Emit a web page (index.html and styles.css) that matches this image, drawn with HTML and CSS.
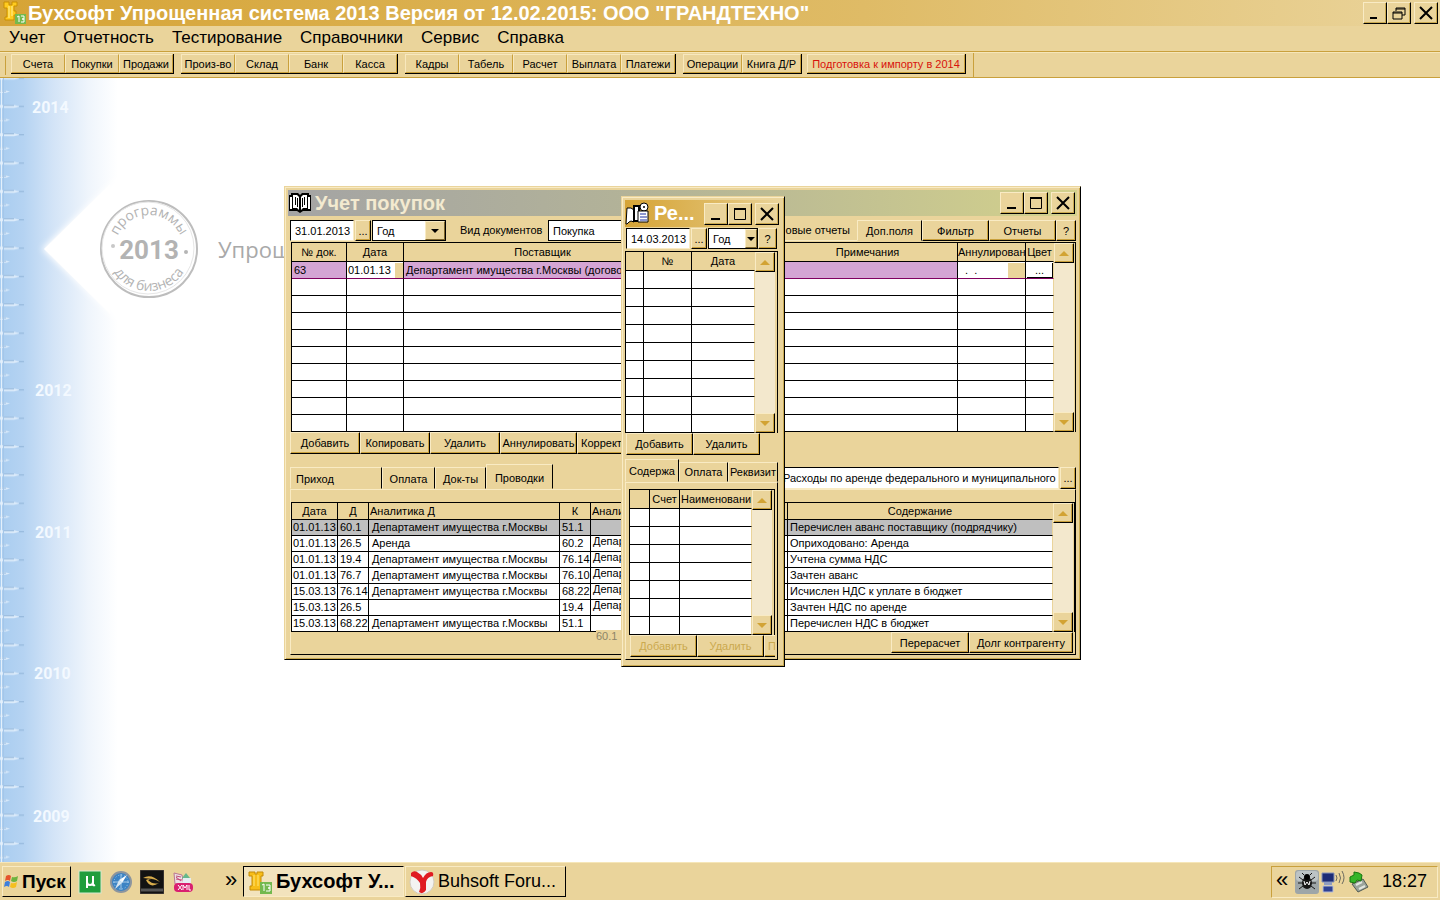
FILE: index.html
```html
<!DOCTYPE html>
<html lang="ru">
<head>
    <meta charset="UTF-8">
    <meta name="viewport" content="width=device-width, initial-scale=1.0">
    <title>Бухсофт Упрощенная система 2013</title>
    <link rel="stylesheet" href="styles.css">
</head>
<body>
    <header class="titlebar main-title">
        <svg class="app-icon" width="24" height="24" viewBox="0 0 24 24">
            <path d="M2 1h5v3h3V1h5v4h-3v5h2v4h-2v5H3v-3h2V7H2z" fill="#ffcb1f" stroke="#c98f00"/>
            <path d="M7 5v12M10 5v10" stroke="#fff19a"/>
            <rect x="13" y="13" width="11" height="10" fill="#73b94e"/>
            <path d="M15 16l2-1v6M19 15h3v3h-2h2v3h-3" fill="none" stroke="#fff"/>
        </svg>
        <h1>Бухсофт Упрощенная система 2013 Версия от 12.02.2015: ООО "ГРАНДТЕХНО"</h1>
        <div class="win-buttons">
            <button class="wb" aria-label="Свернуть"><svg width="14" height="14"><path d="M2 12h7" stroke="#000" stroke-width="2"/></svg></button>
            <button class="wb" aria-label="Восстановить"><svg width="14" height="14"><path d="M4 5V2h9v7h-3M4 3h9M1 6h9v7H1zM1 7h9" fill="none" stroke="#000"/></svg></button>
            <button class="wb gap" aria-label="Закрыть"><svg width="14" height="14"><path d="M1 1l12 12M13 1L1 13" stroke="#000" stroke-width="2"/></svg></button>
        </div>
    </header>
    <nav class="menu">
        <button>Учет</button>
        <button>Отчетность</button>
        <button>Тестирование</button>
        <button>Справочники</button>
        <button>Сервис</button>
        <button>Справка</button>
    </nav>
    <div class="toolbar">
        <div class="group"><button>Счета</button><button>Покупки</button><button>Продажи</button></div>
        <div class="group"><button>Произ-во</button><button>Склад</button><button>Банк</button><button>Касса</button></div>
        <div class="group"><button>Кадры</button><button>Табель</button><button>Расчет</button><button>Выплата</button><button>Платежи</button></div>
        <div class="group wide"><button>Операции</button><button>Книга Д/Р</button></div>
        <div class="group import"><button>Подготовка к импорту в 2014</button></div>
    </div>

    <main class="desktop">
        <svg class="backdrop" width="300" height="784">
            <defs>
                <linearGradient id="sky">
                    <stop offset="0" stop-color="#a9cdf0"/>
                    <stop offset=".2" stop-color="#b5d3f2"/>
                    <stop offset=".45" stop-color="#d3e4f7"/>
                    <stop offset=".75" stop-color="#eff5fc"/>
                    <stop offset="1" stop-color="#fff"/>
                </linearGradient>
                <pattern id="ticks" width="24" height="28.35" patternUnits="userSpaceOnUse" y="15">
                    <path d="M0 12h14l6 1.5-6 1.5H0z" fill="#dcebfa"/>
                    <path d="M3 12.5h11M19 13.5h5" stroke="#8fb3d8"/>
                    <path d="M0 26h6l4 1-4 1H0z" fill="#dcebfa"/>
                    <path d="M0 26.500h6" stroke="#9dbee0"/>
                </pattern>
                <filter id="soft"><feGaussianBlur stdDeviation="3"/></filter>
                <path id="arcTop" d="M115 171a34 34 0 0 1 68 0"/>
                <path id="arcBottom" d="M107 171a42 42 0 0 0 84 0"/>
            </defs>
            <rect width="118" height="784" fill="url(#sky)"/>
            <path d="M42 171L125 92V250z" fill="#fff" filter="url(#soft)"/>
            <path d="M44 171L110 106V236z" fill="#fff"/>
            <rect width="24" height="784" fill="url(#ticks)"/>
            <path d="M1.500 0V784" stroke="#e4f0fb"/>
            <path d="M3.500 0V784" stroke="#a5c6e8"/>
            <g class="years">
                <text x="32" y="35">2014</text>
                <text x="35" y="318">2012</text>
                <text x="35" y="460">2011</text>
                <text x="34" y="601">2010</text>
                <text x="33" y="744">2009</text>
            </g>
            <circle cx="149" cy="171" r="48" fill="none" stroke="#bdbdbd" stroke-width="2"/>
            <circle cx="148" cy="170" r="46" fill="none" stroke="#e6e6e6"/>
            <g class="stamp">
                <text><textPath href="#arcTop" startOffset="50%" text-anchor="middle">программы</textPath></text>
                <text><textPath href="#arcBottom" startOffset="50%" text-anchor="middle">для бизнеса</textPath></text>
                <text class="big" x="149" y="181" text-anchor="middle">2013</text>
            </g>
            <circle cx="113" cy="168" r="2" fill="#c8c8c8"/>
            <circle cx="186" cy="174" r="2" fill="#b5b5b5"/>
            <text class="product" x="218" y="180">Упрощ</text>
        </svg>

        <section class="window purchases">
            <div class="titlebar inactive">
                <svg width="24" height="22" viewBox="0 0 24 22">
                    <path d="M1 3h2V1h7l2 2 2-2h7v2h2v16h-8l-3 2-3-2H1z" fill="#000"/>
                    <path d="M2 5h2v12H2zM5 3h4l2 2v13l-2-2H5zM19 3h-4l-2 2v13l2-2h4zM20 5h2v12h-2z" fill="#fff"/>
                    <path d="M7.500 5v8M9.500 6v9M14.500 6v9M16.500 5v8" stroke="#000"/>
                </svg>
                <h2>Учет покупок</h2>
                <div class="win-buttons">
                    <button class="wb" aria-label="Свернуть"><svg width="14" height="14"><path d="M2 12h9" stroke="#000" stroke-width="2"/></svg></button>
                    <button class="wb" aria-label="Развернуть"><svg width="14" height="14"><path d="M1.500 2v10.500h11V2" fill="none" stroke="#000"/><path d="M1 2h12" stroke="#000" stroke-width="2"/></svg></button>
                    <button class="wb gap" aria-label="Закрыть"><svg width="14" height="14"><path d="M1 1l12 12M13 1L1 13" stroke="#000" stroke-width="2"/></svg></button>
                </div>
            </div>
            <div class="content">
                <div class="row filters">
                    <input class="field date" type="text" value="31.01.2013" aria-label="Дата">
                    <button class="btn dots">...</button>
                    <div class="combo period"><select aria-label="Период"><option>Год</option></select><i></i></div>
                    <label for="kind">Вид документов</label>
                    <div class="combo kind"><select id="kind"><option>Покупка</option></select><i></i></div>
                    <div class="top-tabs">
                        <button class="link-tab">овые отчеты</button>
                        <button class="top-active">Доп.поля</button>
                        <button class="btn">Фильтр</button>
                        <button class="btn">Отчеты</button>
                        <button class="btn help">?</button>
                    </div>
                </div>
                <div class="grid">
                    <table class="docs">
                        <thead><tr><th class="c-no">№ док.</th><th class="c-date">Дата</th><th class="c-supplier">Поставщик</th><th></th><th class="c-notes">Примечания</th><th class="c-annul">Аннулирован</th><th class="c-color">Цвет</th></tr></thead>
                        <tbody>
                            <tr class="current"><td>63</td><td class="edit"><div>01.01.13<b></b></div></td><td>Департамент имущества г.Москвы (договор)</td><td></td><td></td><td class="edit"><div><span>. &nbsp;.</span><b></b></div></td><td class="edit"><button class="cell-dots">...</button></td></tr>
                            <tr><td></td><td></td><td></td><td></td><td></td><td></td><td></td></tr>
                            <tr><td></td><td></td><td></td><td></td><td></td><td></td><td></td></tr>
                            <tr><td></td><td></td><td></td><td></td><td></td><td></td><td></td></tr>
                            <tr><td></td><td></td><td></td><td></td><td></td><td></td><td></td></tr>
                            <tr><td></td><td></td><td></td><td></td><td></td><td></td><td></td></tr>
                            <tr><td></td><td></td><td></td><td></td><td></td><td></td><td></td></tr>
                            <tr><td></td><td></td><td></td><td></td><td></td><td></td><td></td></tr>
                            <tr><td></td><td></td><td></td><td></td><td></td><td></td><td></td></tr>
                            <tr><td></td><td></td><td></td><td></td><td></td><td></td><td></td></tr>
                        </tbody>
                    </table>
                    <div class="scroll"><button class="up" aria-label="Вверх"></button><button class="down" aria-label="Вниз"></button></div>
                </div>
                <div class="row actions">
                    <button class="btn">Добавить</button>
                    <button class="btn">Копировать</button>
                    <button class="btn">Удалить</button>
                    <button class="btn annul">Аннулировать</button>
                    <button class="btn start">Коррект</button>
                </div>
                <div class="row tabs">
                    <button class="tab t-income">Приход</button>
                    <button class="tab t-pay">Оплата</button>
                    <button class="tab t-docs">Док-ты</button>
                    <button class="tab t-entries active">Проводки</button>
                    <input class="field expense" type="text" value="Расходы по аренде федерального и муниципального" aria-label="Статья расходов">
                    <button class="btn dots">...</button>
                </div>
                <div class="panel">
                    <div class="grid">
                        <table class="entries">
                            <thead><tr><th class="e-date">Дата</th><th class="e-acc">Д</th><th class="e-name left">Аналитика Д</th><th class="e-acc">К</th><th class="left">Аналитика К</th><th class="e-text">Содержание</th></tr></thead>
                            <tbody>
                                <tr class="selected"><td>01.01.13</td><td>60.1</td><td>Департамент имущества г.Москвы</td><td>51.1</td><td></td><td>Перечислен аванс поставщику (подрядчику)</td></tr>
                                <tr><td>01.01.13</td><td>26.5</td><td>Аренда</td><td>60.2</td><td class="raised">Департамент</td><td>Оприходовано: Аренда</td></tr>
                                <tr><td>01.01.13</td><td>19.4</td><td>Департамент имущества г.Москвы</td><td>76.14</td><td class="raised">Департамент</td><td>Учтена сумма НДС</td></tr>
                                <tr><td>01.01.13</td><td>76.7</td><td>Департамент имущества г.Москвы</td><td>76.10</td><td class="raised">Департамент</td><td>Зачтен аванс</td></tr>
                                <tr><td>15.03.13</td><td>76.14</td><td>Департамент имущества г.Москвы</td><td>68.22</td><td class="raised">Департамент</td><td>Исчислен НДС к уплате в бюджет</td></tr>
                                <tr><td>15.03.13</td><td>26.5</td><td></td><td>19.4</td><td class="raised">Департамент</td><td>Зачтен НДС по аренде</td></tr>
                                <tr><td>15.03.13</td><td>68.22</td><td>Департамент имущества г.Москвы</td><td>51.1</td><td></td><td>Перечислен НДС в бюджет</td></tr>
                            </tbody>
                        </table>
                        <div class="scroll"><button class="up" aria-label="Вверх"></button><button class="down" aria-label="Вниз"></button></div>
                        <span class="ghost">60.1</span>
                    </div>
                    <div class="row footer">
                        <button class="btn">Перерасчет</button>
                        <button class="btn debt">Долг контрагенту</button>
                    </div>
                </div>
            </div>
        </section>

        <section class="window registry">
            <div class="titlebar">
                <svg width="26" height="24" viewBox="0 0 26 24">
                    <path d="M2 6h4l3 2v12l-3-1-2 1-2 2H1z" fill="#fff" stroke="#000"/>
                    <path d="M9 4h5v15H9z" fill="#fff" stroke="#000" stroke-width="2"/>
                    <circle cx="19" cy="5" r="4" fill="#fff" stroke="#000"/>
                    <path d="M13 9h10v11H13z" fill="#fff" stroke="#000"/>
                    <path d="M15 12h6M15 15h7M15 18h7" stroke="#1c2fa0"/>
                    <circle cx="19" cy="5" r="1"/>
                </svg>
                <h2>Ре...</h2>
                <div class="win-buttons">
                    <button class="wb" aria-label="Свернуть"><svg width="14" height="14"><path d="M2 12h9" stroke="#000" stroke-width="2"/></svg></button>
                    <button class="wb" aria-label="Развернуть"><svg width="14" height="14"><path d="M1.500 2v10.500h11V2" fill="none" stroke="#000"/><path d="M1 2h12" stroke="#000" stroke-width="2"/></svg></button>
                    <button class="wb gap" aria-label="Закрыть"><svg width="14" height="14"><path d="M1 1l12 12M13 1L1 13" stroke="#000" stroke-width="2"/></svg></button>
                </div>
            </div>
            <div class="content">
                <div class="row filters">
                    <input class="field date" type="text" value="14.03.2013" aria-label="Дата">
                    <button class="btn dots">...</button>
                    <div class="combo period"><select aria-label="Период"><option>Год</option></select><i></i></div>
                    <button class="btn help">?</button>
                </div>
                <div class="grid">
                    <table>
                        <thead><tr><th class="r-mark"></th><th class="r-no">№</th><th>Дата</th></tr></thead>
                        <tbody>
                            <tr><td></td><td></td><td></td></tr>
                            <tr><td></td><td></td><td></td></tr>
                            <tr><td></td><td></td><td></td></tr>
                            <tr><td></td><td></td><td></td></tr>
                            <tr><td></td><td></td><td></td></tr>
                            <tr><td></td><td></td><td></td></tr>
                            <tr><td></td><td></td><td></td></tr>
                            <tr><td></td><td></td><td></td></tr>
                            <tr><td></td><td></td><td></td></tr>
                        </tbody>
                    </table>
                    <div class="scroll"><button class="up" aria-label="Вверх"></button><button class="down" aria-label="Вниз"></button></div>
                </div>
                <div class="row actions">
                    <button class="btn">Добавить</button>
                    <button class="btn">Удалить</button>
                </div>
                <div class="row tabs">
                    <button class="tab t-body active">Содержа</button>
                    <button class="tab t-pay">Оплата</button>
                    <button class="tab t-req">Реквизит</button>
                </div>
                <div class="panel">
                    <div class="grid">
                        <table>
                            <thead><tr><th class="s-mark"></th><th class="s-acc">Счет</th><th class="left">Наименовани</th></tr></thead>
                            <tbody>
                                <tr><td></td><td></td><td></td></tr>
                                <tr><td></td><td></td><td></td></tr>
                                <tr><td></td><td></td><td></td></tr>
                                <tr><td></td><td></td><td></td></tr>
                                <tr><td></td><td></td><td></td></tr>
                                <tr><td></td><td></td><td></td></tr>
                                <tr><td></td><td></td><td></td></tr>
                            </tbody>
                        </table>
                        <div class="scroll"><button class="up" aria-label="Вверх"></button><button class="down" aria-label="Вниз"></button></div>
                    </div>
                    <div class="row actions">
                        <button class="btn" disabled>Добавить</button>
                        <button class="btn" disabled>Удалить</button>
                        <button class="btn start" disabled>П</button>
                    </div>
                </div>
            </div>
        </section>
    </main>

    <footer class="taskbar">
        <button class="start-btn">
            <svg width="17" height="16" viewBox="0 0 17 16">
                <path d="M3 2q3-2 5 0L7 7Q5 5 2 7z" fill="#e5532d"/>
                <path d="M9 3q3 1 6-1l-1 5q-3 2-6 0z" fill="#6cb33e"/>
                <path d="M2 8q3-2 5 0l-1 5q-2-2-5 0z" fill="#3f7fdb"/>
                <path d="M8 9q3 1 6-1l-1 5q-3 2-6 0z" fill="#f5bf1f"/>
            </svg>
            Пуск
        </button>
        <div class="quick">
            <svg width="24" height="24" viewBox="0 0 24 24"><rect x="1" y="1" width="22" height="22" fill="#1f9d3c" stroke="#d5e8cf"/><path d="M9 6v12M9 12q0 3 3 3t3-3V6v8q0 2 2 1" fill="none" stroke="#fff" stroke-width="2"/></svg>
            <svg width="24" height="24" viewBox="0 0 24 24"><circle cx="12" cy="12" r="10" fill="#3c83c4" stroke="#8c959e" stroke-width="2"/><circle cx="12" cy="12" r="7" fill="none" stroke="#a7d0ee" stroke-dasharray="1 2"/><path d="M18 5l-5 8-3-3z" fill="#fff"/><path d="M6 19l4-9 3 3z" fill="#d8e6f1"/><path d="M12 4v16M4 12h16" stroke="#d3e8f7" stroke-width=".7"/></svg>
            <svg width="24" height="24" viewBox="0 0 24 24"><rect x="0" y="0" width="24" height="24" fill="#121212" stroke="#5b5148"/><path d="M3 8q8-5 17 4-8-5-12-2 5 5 11 3-9 6-13-3 4-2 7-1" fill="#d9ad4c"/><path d="M1 20h22" stroke="#555" stroke-width="3"/></svg>
            <svg width="24" height="24" viewBox="0 0 24 24"><path d="M3 3l8 2 2 10-9-1z" fill="#ece0e5" stroke="#bb7791"/><path d="M5 6l5 1M5 9l6 1M5 7l5 4" stroke="#c34b77"/><path d="M15 3l4 5-4 4-4-4z" fill="#65b88c"/><path d="M12 8h8v6h-8z" fill="#e4edf2"/><rect x="3" y="13" width="19" height="9" rx="4" fill="#d91f70"/><path d="M7 15l4 5M11 15l-4 5M12 20v-5l2 3 2-3v5M18 15v5h2" fill="none" stroke="#fff"/></svg>
        </div>
        <span class="more">»</span>
        <button class="task pressed">
            <svg width="26" height="24" viewBox="0 0 26 24">
                <path d="M2 2h6v2h2V2h6v4h-2v10h2v4H3v-4h2V6H2z" fill="#f7bd18" stroke="#c48b06"/>
                <path d="M7 5v11M11 5v11" stroke="#ffe779"/>
                <rect x="13" y="12" width="12" height="12" fill="#73b94e"/>
                <path d="M15 15l2-1v7M19 15h4v3h-2h2v3h-4" fill="none" stroke="#fff"/>
            </svg>
            <b>Бухсофт У...</b>
        </button>
        <button class="task">
            <svg width="26" height="26" viewBox="0 0 26 26"><circle cx="13" cy="13" r="12" fill="#f3f3f1" stroke="#d2ccc0"/><path d="M2 4q3-3 6-1 4 2 6 6 3-6 8-6 3 0 2 4-6 1-7 6v8q-3 5-7 2 2-4 1-9Q8 9 2 7z" fill="#e01b22"/></svg>
            <span>Buhsoft Foru...</span>
        </button>
        <div class="tray">
            <span class="more">«</span>
            <svg width="24" height="24" viewBox="0 0 24 24"><rect width="24" height="24" rx="3" fill="#9ea6a8"/><rect x="1" y="1" width="22" height="10" rx="3" fill="#bcc3c5"/><ellipse cx="12" cy="13" rx="5" ry="6" fill="#171717"/><circle cx="12" cy="7" r="3"/><path d="M8 10L4 7M8 13H3M8 16l-4 3M16 10l4-3M16 13h5M16 16l4 3M9 5L7 3M15 5l2-2" stroke="#171717"/><path d="M9 11l1 4 2-3 2 3 1-4" fill="none" stroke="#fff"/></svg>
            <svg width="24" height="24" viewBox="0 0 24 24"><path d="M1 3h12v9H1z" fill="#1d2c76" stroke="#8693ba"/><path d="M3 12h8v3H3z" fill="#8f9cc0"/><path d="M2 16h10v6H2z" fill="#2e4193" stroke="#b6bfd9"/><path d="M15 5q2 3 0 6M18 3q3 5 0 10M21 1q4 7 0 13" fill="none" stroke="#6b6a60"/></svg>
            <svg width="24" height="24" viewBox="0 0 24 24"><path d="M5 14l11-5 5 8-10 5z" fill="#9aa49b" stroke="#505a54"/><path d="M9 15l6-3M12 19l6-3" stroke="#e1e6e0" stroke-width="2"/><path d="M3 7l4-2V2l5 1 3 2-1 6-4-1-2 3-5-1z" fill="#35b528" stroke="#19750f"/></svg>
            <time>18:27</time>
        </div>
    </footer>
</body>
</html>
```
FILE: styles.css
```css
* {
    margin: 0;
    padding: 0;
    box-sizing: border-box;
}

body {
    display: flex;
    flex-direction: column;
    height: 100vh;
    overflow: hidden;
    background-color: #ead49b;
    color: #000;
    font-family: "Liberation Sans", Arial, sans-serif;
    font-size: 11px;
}

button, input, select {
    font: inherit;
    color: inherit;
    border: none;
    background: none;
    border-radius: 0;
    white-space: nowrap;
}

svg {
    flex-shrink: 0;
}

/* title bars */
.titlebar {
    display: flex;
    align-items: center;
    height: 26px;
    flex-shrink: 0;
    background: linear-gradient(to right, #d6a436, #dfbb66 60%, #ead49b);
    color: #fff;
}

.titlebar h1, .titlebar h2 {
    flex: 1;
    font-size: 20px;
    white-space: nowrap;
    overflow: hidden;
}

.titlebar h2 {
    padding-left: 3px;
}

.main-title {
    padding: 0 2px;
    gap: 2px;
}

.inactive {
    background: linear-gradient(to right, #a4a4a4, #b5b596 50%, #d3d18c);
    color: #f3ead0;
}

.win-buttons {
    display: flex;
}

.window .win-buttons {
    margin-right: 2px;
}

.wb {
    width: 24px;
    height: 22px;
    display: flex;
    align-items: center;
    justify-content: center;
    background-color: #ead49b;
    border: 1px solid;
    border-color: #f9ebc4 #000 #000 #f9ebc4;
    box-shadow: inset -1px -1px #c9a951;
}

.gap {
    margin-left: 3px;
}

/* menu and toolbar */
.menu {
    display: flex;
    gap: 18px;
    height: 25px;
    padding: 0 9px 2px;
    flex-shrink: 0;
    font-size: 17px;
}

.toolbar {
    display: flex;
    gap: 7px;
    height: 27px;
    padding: 2px 0 3px 11px;
    flex-shrink: 0;
    border-top: 1px solid #c9a03c;
    border-bottom: 1px solid #c9a03c;
    box-shadow: inset 0 1px #f6e6b8;
    background: linear-gradient(#c9a03c, #c9a03c) 5px 4px / 1px 19px no-repeat, linear-gradient(#c9a03c, #c9a03c) 973px 0 / 1px 26px no-repeat;
}

.group {
    display: flex;
    border-right: 1px solid #000;
    border-bottom: 1px solid #000;
}

.group button {
    width: 54px;
    border: 1px solid;
    border-color: #f8e8bd #c9a03c #c9a03c #f8e8bd;
}

.group.wide button {
    width: 59px;
}

.group.import {
    margin-left: -2px;
}

.group.import button {
    width: 158px;
    color: #d8120c;
}

/* desktop */
.desktop {
    position: relative;
    flex: 1;
    min-height: 0;
    overflow: hidden;
    background-color: #fff;
}

.backdrop {
    display: block;
}

.years {
    font-family: Roboto, sans-serif;
    font-size: 16px;
    font-weight: bold;
    fill: #f3f9ff;
}

.stamp {
    font-family: "Open Sans", sans-serif;
    font-size: 14px;
    fill: #b3b3b3;
}

.stamp .big {
    font-family: Roboto, sans-serif;
    font-size: 26px;
    font-weight: bold;
}

.product {
    font-family: "Open Sans", sans-serif;
    font-size: 22px;
    fill: #a9a9a9;
}

/* windows */
.window {
    position: absolute;
    padding: 3px;
    background-color: #ead49b;
    border: 1px solid;
    border-color: #ead49b #000 #000 #ead49b;
    box-shadow: inset 1px 1px #f9ebc4, inset -1px -1px #c9a951;
}

.purchases {
    left: 284px;
    top: 108px;
    width: 797px;
}

.registry {
    left: 621px;
    top: 118px;
    width: 164px;
}

.content {
    padding: 4px 1px 1px 2px;
}

.row {
    display: flex;
    white-space: nowrap;
}

.filters {
    height: 21px;
    margin-bottom: 1px;
    align-items: stretch;
}

.filters label {
    width: 88px;
    line-height: 20px;
}

.btn {
    flex-shrink: 0;
    background-color: #ead49b;
    border: 1px solid;
    border-color: #f9ebc4 #000 #000 #f9ebc4;
    box-shadow: inset -1px -1px #c9a03c;
}

.btn:disabled {
    color: #cba94e;
}

.start {
    text-align: left;
    padding-left: 3px;
}

.field {
    background-color: #fff;
    border: 1px solid;
    border-color: #000 #f9ebc4 #f9ebc4 #000;
    padding: 0 1px 0 4px;
    min-width: 0;
}

.field.date {
    width: 64px;
}

.dots {
    width: 16px;
    margin: 0 1px;
}

.combo {
    position: relative;
    display: flex;
    background-color: #fff;
    border: 1px solid #000;
}

.combo select {
    flex: 1;
    min-width: 0;
    appearance: none;
    padding-left: 4px;
}

.combo i {
    width: 20px;
    background-color: #ead49b;
    border: 1px solid;
    border-color: #f9ebc4 #7d642a #7d642a #f9ebc4;
    display: flex;
    align-items: center;
    justify-content: center;
}

.combo i::after {
    content: "";
    border: 4px solid transparent;
    border-top-color: #000;
    border-bottom: none;
}

.period {
    width: 74px;
    margin-right: 14px;
}

.kind {
    width: 150px;
}

.top-tabs {
    display: flex;
    margin-left: auto;
}

.top-tabs .btn {
    width: 67px;
}

.top-tabs .help {
    width: 20px;
}

.link-tab {
    width: 78px;
    border-bottom: 1px solid #f9ebc4;
    padding-right: 7px;
    text-align: right;
}

.top-active {
    width: 65px;
    border: 1px solid;
    border-color: #f9ebc4 #000 #ead49b #f9ebc4;
}

/* grids */
.grid {
    position: relative;
    display: flex;
    border: 1px solid #000;
    border-bottom: none;
}

.purchases .content > .grid {
    margin-left: 1px;
}

table {
    flex: 1;
    width: 0;
    table-layout: fixed;
    border-spacing: 0;
    background-color: #fff;
}

th, td {
    height: 17px;
    line-height: 15px;
    overflow: hidden;
    white-space: nowrap;
    text-align: left;
    font-weight: normal;
    border-right: 1px solid #000;
    border-bottom: 1px solid #000;
    padding: 0 2px;
}

th {
    height: 19px;
    background-color: #ead49b;
    text-align: center;
    padding: 0;
}

th:last-child, td:last-child {
    border-right-color: #ead49b;
}

th.left {
    text-align: left;
    padding-left: 1px;
}

.c-no { width: 55px; }
.c-date { width: 57px; }
.c-supplier { width: 278px; }
.c-notes { width: 180px; }
.c-annul { width: 68px; }
.c-color { width: 28px; }

.current td {
    background-color: #d4a5d4;
    border-bottom-color: #800060;
}

.current td.edit {
    background-color: #fff;
    padding: 0 0 0 1px;
}

.edit div {
    display: flex;
    justify-content: space-between;
}

.edit span {
    padding-left: 6px;
}

.edit b {
    width: 8px;
    height: 15px;
    background-color: #ead49b;
}

.edit span + b {
    width: 17px;
}

.cell-dots {
    display: block;
    width: 100%;
    height: 15px;
    border-right: 1px solid #000;
    border-bottom: 1px solid #000;
}

.entries th, .entries td {
    height: 16px;
    line-height: 15px;
}

.e-date { width: 46px; }
.e-acc { width: 31px; }
.e-name { width: 191px; }
.e-text { width: 265px; }

.entries td {
    padding: 0 1px;
}

.entries td:nth-child(n + 2) {
    padding-left: 2px;
}

.entries td:nth-child(3) {
    padding-left: 3px;
}

.selected td {
    background-color: #bfbfbf;
}

.entries .raised {
    line-height: 11px;
    vertical-align: top;
}

.ghost {
    position: absolute;
    left: 304px;
    bottom: -10px;
    width: 30px;
    background-color: #ead49b;
    color: #8d8468;
}

.scroll {
    display: flex;
    flex-direction: column;
    justify-content: space-between;
    width: 22px;
    background-color: #f3e8cd;
    border-right: 2px solid #ead49b;
}

.purchases .scroll {
    width: 21px;
    border-right-width: 1px;
}

.scroll button {
    height: 20px;
    display: flex;
    align-items: center;
    justify-content: center;
    background-color: #ead49b;
    border: 1px solid;
    border-color: #f9ebc4 #000 #000 #f9ebc4;
    box-shadow: inset -1px -1px #c9a03c;
}

.scroll button::after {
    content: "";
    border: 5px solid transparent;
}

.scroll .up::after {
    border-top: none;
    border-bottom-color: #d2a334;
}

.scroll .down::after {
    border-bottom: none;
    border-top-color: #d2a334;
}

/* buttons and tabs */
.actions {
    height: 22px;
}

.actions .btn {
    width: 70px;
}

.actions .annul {
    width: 77px;
}

.tabs {
    margin-top: 13px;
    height: 22px;
    align-items: stretch;
}

.tab {
    border: 1px solid;
    border-color: #f9ebc4 #000 transparent #f9ebc4;
    flex-shrink: 0;
    padding-top: 2px;
}

.tab.active {
    margin-top: -3px;
}

.t-income {
    width: 92px;
    text-align: left;
    padding-left: 5px;
}

.t-pay { width: 53px; }
.t-docs { width: 51px; }
.t-entries { width: 67px; }

.tabs .dots {
    margin-right: 0;
}

.expense {
    flex: 1;
    margin-left: 226px;
    padding: 0 0 0 3px;
}

.panel {
    border: 1px solid;
    border-color: #f9ebc4 #000 #000 #f9ebc4;
    padding: 12px 0 1px;
}

.purchases .entries th {
    height: 17px;
}

.footer {
    height: 21px;
    justify-content: flex-end;
    padding-right: 2px;
}

.footer .btn {
    width: 78px;
}

.footer .debt {
    width: 104px;
}

/* narrow window */
.registry .titlebar {
    height: 27px;
}

.registry .content {
    padding: 1px 3px 3px 0;
}

.registry .filters {
    margin-bottom: 2px;
    padding-left: 1px;
    overflow: hidden;
}

.registry .period {
    width: 50px;
    margin-right: 0;
}

.registry .period i {
    width: 12px;
}

.registry .help {
    width: 19px;
}

.registry td {
    height: 18px;
}

.r-mark { width: 18px; }
.r-no { width: 48px; }
.s-mark { width: 20px; }
.s-acc { width: 30px; }

.registry .actions .btn {
    width: 67px;
}

.registry .actions {
    padding-left: 1px;
    overflow: hidden;
}

.registry .tabs {
    margin-top: 7px;
    height: 20px;
}

.registry .tab {
    padding-top: 0;
}

.registry .t-body {
    width: 54px;
}

.registry .t-pay {
    width: 49px;
}

.registry .t-req {
    flex: 1;
    min-width: 0;
    overflow: hidden;
}

.registry .panel {
    padding: 6px 2px 2px 3px;
}

/* taskbar */
.taskbar {
    display: flex;
    align-items: center;
    height: 38px;
    padding: 0 2px;
    flex-shrink: 0;
    border-top: 1px solid #f6e6b8;
    font-size: 18px;
}

.start-btn {
    display: flex;
    align-items: center;
    width: 69px;
    height: 31px;
    gap: 2px;
    font-size: 19px;
    font-weight: bold;
    border: 1px solid;
    border-color: #f9ebc4 #000 #000 #f9ebc4;
}

.quick {
    display: flex;
    gap: 7px;
    margin-left: 7px;
    width: 147px;
}

.more {
    width: 17px;
    padding-bottom: 4px;
    font-size: 22px;
}

.task {
    display: flex;
    align-items: center;
    gap: 3px;
    width: 161px;
    height: 31px;
    padding-left: 3px;
    margin-left: 1px;
    border: 1px solid;
    border-color: #f9ebc4 #000 #000 #f9ebc4;
}

.task b {
    font-size: 20px;
}

.pressed {
    background-color: #f2e3bd;
    border-color: #000 #f9ebc4 #f9ebc4 #000;
}

.tray {
    display: flex;
    align-items: center;
    gap: 2px;
    height: 32px;
    margin-left: auto;
    padding: 0 10px 0 4px;
    border: 1px solid;
    border-color: #c9a03c #f9ebc4 #f9ebc4 #c9a03c;
}

.tray time {
    margin-left: 9px;
}
```
